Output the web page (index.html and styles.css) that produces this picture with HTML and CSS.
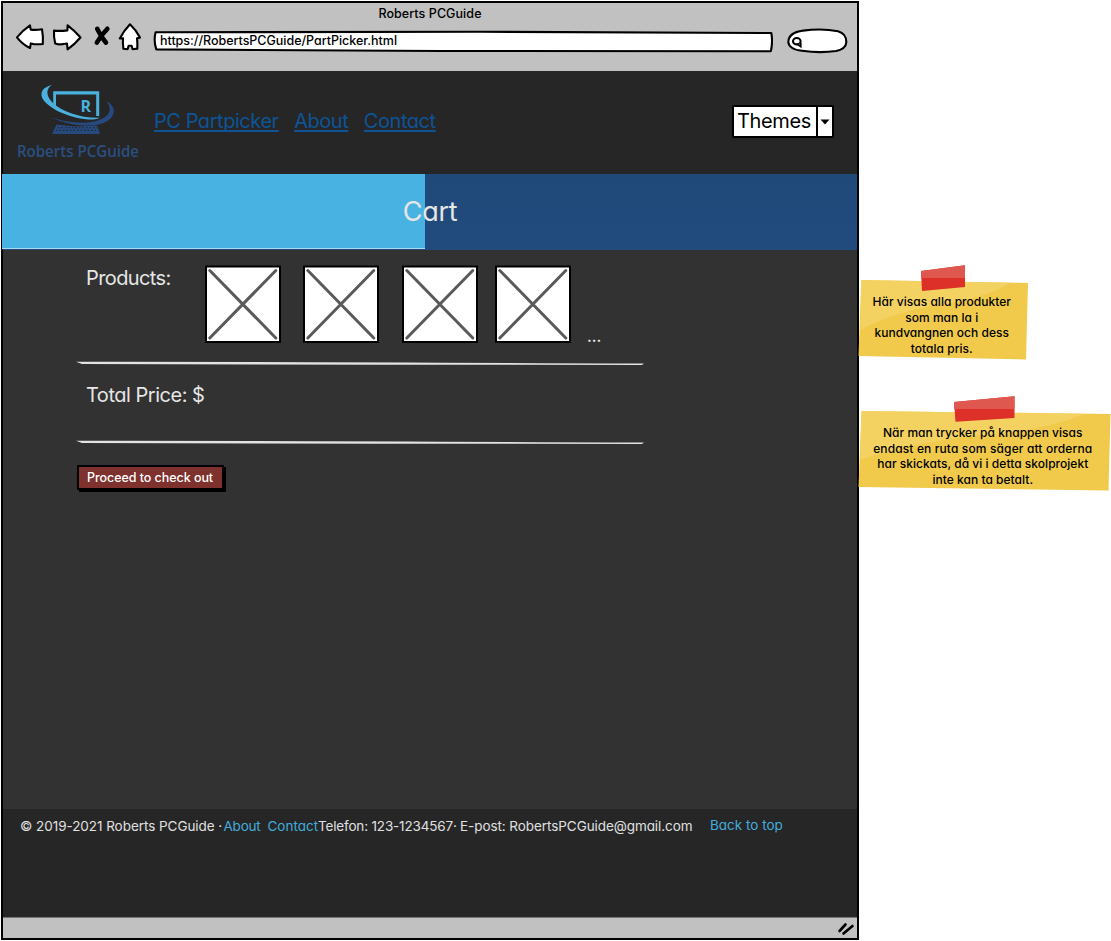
FILE: index.html
```html
<!DOCTYPE html>
<html lang="sv">
<head>
<meta charset="utf-8">
<title>Roberts PCGuide</title>
<link rel="stylesheet" href="styles.css">
</head>
<body>
<div class="board">
  <div class="window">
    <header class="chrome">
      <div class="window-title">Roberts PCGuide</div>
      <div class="toolbar">
        <svg class="nav-icons" width="130" height="32" viewBox="13 20 130 32" fill="#fff" stroke="#000" stroke-width="2.1" stroke-linejoin="round" stroke-linecap="round">
          <path d="M17 37.3 Q23 30 30 25.300 L30.700 29.600 Q36 30.200 42 29.200 Q43.400 37 42.800 44 Q36 44.800 30.800 43.400 L30 48 Q22 44 17 37.300Z"/>
          <path d="M54 30.600 Q60 31.300 67.400 30.400 L67.600 25.300 Q74 30 80.500 37.500 Q75 44 67.600 49.300 L67 43.600 Q60 45.200 55.200 43.400 Q53.600 37 54 30.600Z"/>
          <path stroke-width="4.600" d="M97.200 28.800Q101 37 106 42.600M107.300 28.800Q102 34 96.800 42.600"/>
          <path d="M130 24.300 Q136 30 140 37.600 L137 38.200 Q137.600 43 137.300 48.600 L132.600 49.200 L131.600 45.800 L128.600 45.800 L127.600 49.200 L123.400 48.800 Q122.600 43 123 38.200 L119.800 38.400 Q124 30.600 130 24.300Z"/>
        </svg>
        <div class="address">
          <svg class="shape" width="620" height="24" viewBox="153 29 620 24"><path d="M155.600 32.200 L480 31.800 L771.300 33 Q773 42 770.800 51.300 L440 51 L156.300 49.400 Q153.400 41 155.600 32.200Z" fill="#fff" stroke="#000" stroke-width="2.100" stroke-linejoin="round"/></svg>
          <span>https://RobertsPCGuide/PartPicker.html</span>
        </div>
        <svg class="search" width="62" height="26" viewBox="786 28 62 26" fill="#fff" stroke="#000" stroke-width="2.100" stroke-linecap="round">
          <path d="M802 50.800 Q789 49.500 788.300 42 Q788.600 32.500 803 30.600 Q822 28.200 838 31.200 Q846.500 33.500 846.300 42.500 Q845.800 49 836 51 Q820 53.400 802 50.800Z"/>
          <ellipse cx="796.800" cy="41.200" rx="3.800" ry="3.200"/>
          <path d="M797.500 44.300L800.700 46.600V43.500" stroke-width="1.800"/>
        </svg>
      </div>
    </header>

    <nav class="site-nav">
      <div class="logo">
        <svg width="76" height="50" viewBox="40 84 76 50">
          <path d="M53.200 106V91.200H99.200V116H96.200V94.600H56V108Z" fill="#4ab1df"/>
          <path d="M52 85C46.500 88 45 95 52.500 102.500C62 112 82 118.600 100 117.800C97 119.700 91 119.800 86 119.200C68 117.500 47 108 42 97.500C40 91 44 87 52 85Z" fill="#4ab1df"/>
          <path d="M106.500 101.500C112 104 115.600 109 113 115C108.500 124.500 92 127.500 74 124.500C64 122.500 56 120 51 117.500C62 121 76 123.500 88 122.500C106 120.500 115 112 106.500 101.500Z" fill="#26497e"/>
          <path d="M56.500 124.500L74 126.500L97 125.500L100 134H52Z" fill="#26497e"/>
          <path d="M58 127.700H97M56 130.300H98" stroke="#262626" stroke-width="1" stroke-dasharray="1.500 2" fill="none"/>
          <text x="80.500" y="111.500" class="logo-r">R</text>
        </svg>
        <span class="logo-name">Roberts PCGuide</span>
      </div>
      <div class="links">
        <a>PC Partpicker</a>
        <a>About</a>
        <a>Contact</a>
      </div>
      <div class="themes">
        <span class="themes-label">Themes</span>
        <span class="themes-arrow"><svg width="10" height="6" viewBox="0 0 10 6"><path d="M.5 .5H9.500L5 5.500Z"/></svg></span>
      </div>
    </nav>

    <section class="banner">
      <div class="banner-left"></div>
      <h1>Cart</h1>
    </section>

    <main>
      <div class="products">
        <div class="label">Products:</div>
        <svg class="thumb" viewBox="0 0 76 78"><rect x="1" y="1.500" width="74" height="75.500"/><path d="M4.800 5.500L70.800 73M70.800 5.500L4.800 73"/></svg>
        <svg class="thumb second" viewBox="0 0 76 78"><rect x="1" y="1.500" width="74" height="75.500"/><path d="M4.800 5.500L70.800 73M70.800 5.500L4.800 73"/></svg>
        <svg class="thumb third" viewBox="0 0 76 78"><rect x="1" y="1.500" width="74" height="75.500"/><path d="M4.800 5.500L70.800 73M70.800 5.500L4.800 73"/></svg>
        <svg class="thumb fourth" viewBox="0 0 76 78"><rect x="1" y="1.500" width="74" height="75.500"/><path d="M4.800 5.500L70.800 73M70.800 5.500L4.800 73"/></svg>
        <span class="more">...</span>
      </div>
      <svg class="rule" viewBox="0 0 568 4"><path d="M0 .8Q200 .6 568 2.600L566 4Q260 3.700 6 3Z"/></svg>
      <div class="total">Total Price: $</div>
      <svg class="rule" viewBox="0 0 568 4"><path d="M0 .8Q200 .6 568 2.600L566 4Q260 3.700 6 3Z"/></svg>
      <button class="checkout">Proceed to check out</button>
    </main>

    <footer class="site-footer">
      <span class="copyright">© 2019-2021 Roberts PCGuide ·</span>
      <a class="foot-about">About</a>
      <a class="foot-contact">Contact</a>
      <span class="phone">Telefon: 123-1234567·</span>
      <span class="email">E-post: RobertsPCGuide@gmail.com</span>
      <a class="to-top">Back to top</a>
    </footer>
    <div class="status">
      <svg width="18" height="14" viewBox="0 0 18 14" stroke="#000" stroke-width="2.600" stroke-linecap="round"><path d="M2.500 9L8.500 2.500M6.500 11.500L15.500 4"/></svg>
    </div>
  </div>

  <aside>
    <div class="note note-a">
      <svg class="paper" width="171" height="96" viewBox="858 264 171 96">
        <path d="M861.300 280L1028 283L1026 359.500L858.500 356Z" fill="#f1ca4c"/>
        <path d="M861.300 280L1010 282.700Q985 299 935 305Q890 314 860 330Z" fill="#f4d468" opacity=".75"/>
        <path d="M921 271L965 265.200V287L922 291Z" fill="#dd3028"/>
        <path d="M921 271L965 265.200V278H921Z" fill="#df5850"/>
      </svg>
      <p>Här visas alla produkter<br>som man la i<br>kundvangnen och dess<br>totala pris.</p>
    </div>
    <div class="note note-b">
      <svg class="paper" width="253" height="96" viewBox="858 395 253 96">
        <path d="M861.500 411L1110.500 414L1108.500 490.500L858.500 487Z" fill="#f1ca4c"/>
        <path d="M861.500 411L1084 413.700Q1050 430 970 436Q900 446 860 460Z" fill="#f4d468" opacity=".75"/>
        <path d="M954 402L1014.500 396.300V418L955.500 421.700Z" fill="#dd3028"/>
        <path d="M954 402L1014.500 396.300V409H954Z" fill="#df5850"/>
      </svg>
      <p>När man trycker på knappen visas<br><span class="loose">endast en ruta som säger att orderna</span><br>har skickats, då vi i detta skolprojekt<br>inte kan ta betalt.</p>
    </div>
  </aside>
</div>
</body>
</html>
```
FILE: styles.css
```css
* { box-sizing: border-box; }
body { margin: 0; background: #fff; font-family: Inter, "Open Sans", sans-serif; font-feature-settings: "cv11" 1; font-weight: 400; color: #000; }
svg { display: block; flex: none; }
span, a { white-space: nowrap; }
.board { display: flex; width: 1111px; height: 941px; overflow: hidden; }
.window { width: 858px; height: 939px; margin: 1px 0 0 1px; border: 2px solid #000; background: #323232; display: flex; flex-direction: column; flex: none; }

.chrome { height: 68px; background: #c1c1c1; flex: none; }
.window-title { height: 21px; line-height: 21px; text-align: center; font-size: 12.5px; letter-spacing: .07px; font-weight: 500; }
.toolbar { display: flex; align-items: flex-start; padding-left: 10px; }
.nav-icons { margin-top: -4px; }
.address { position: relative; width: 620px; height: 24px; margin: 5px 0 0 10px; padding-left: 7px; line-height: 24px; font-size: 12.5px; letter-spacing: -.02px; font-weight: 500; }
.shape { position: absolute; left: 0; top: 0; }
.address span { position: relative; }
.search { margin: 4px 0 0 13px; }

.site-nav { height: 103px; flex: none; background: #262626; display: flex; align-items: flex-start; }
.logo { width: 121px; margin: 13px 0 0 14px; display: flex; flex-direction: column; align-items: center; color: #2a4f80; font: 600 17px/34px "Open Sans", sans-serif; }
.logo-name { transform: scaleX(.885); }
.logo-r { font: 700 16px "Open Sans", sans-serif; fill: #4ab1df; }
.links { display: flex; gap: 15.5px; margin: 36px 0 0 16px; line-height: 28px; font-size: 20px; letter-spacing: -.45px; color: #0d5497; }
.links a { text-decoration: underline; text-decoration-thickness: 1.5px; text-underline-offset: 2px; text-decoration-skip-ink: none; }
.themes { margin: 34px 23px 0 auto; width: 102px; height: 33px; border: 2px solid #000; border-radius: 2px; background: #fff; display: flex; }
.themes-label { width: 82px; padding-left: 3px; line-height: 29px; font-size: 20px; letter-spacing: -.35px; }
.themes-arrow { flex: 1; border-left: 2px solid #000; display: flex; align-items: center; justify-content: center; }

.banner { height: 76px; flex: none; background: linear-gradient(#1e4979, #214b7c); display: flex; position: relative; }
.banner-left { width: 423px; height: 75px; margin-left: -1px; background: #48b2e2; border-bottom: 1px solid #a9d9ee; }
h1 { position: absolute; inset: 0; margin: 0; line-height: 75px; text-align: center; font-size: 27px; letter-spacing: -.3px; font-weight: 400; color: #e6e6e6; }

main { height: 559px; flex: none; padding: 15px 0 0 74px; color: #e6e6e6; font-size: 20px; }
.products { display: flex; height: 78px; }
.label { width: 128px; padding-left: 9px; line-height: 27px; letter-spacing: -.6px; }
.thumb { width: 76px; height: 78px; fill: #fff; stroke: #5a5a5a; stroke-width: 3; stroke-linecap: round; }
.thumb rect { stroke: #000; stroke-width: 2; }
.second { margin-left: 22px; }
.third { margin-left: 23px; }
.fourth { margin-left: 17px; }
.more { margin: 62px 0 0 16px; font-size: 15px; font-weight: 600; line-height: 20px; }
.rule { width: 568px; height: 4px; margin: 18px 0 0 -1px; fill: #e4e2e2; }
.total { height: 57px; padding: 16px 0 0 9px; line-height: 28px; letter-spacing: -.48px; }
.checkout { display: block; margin: 21px 0 0 0; width: 147px; height: 25px; padding: 0 0 0 8px; border: 2px solid #000; background: #7e312d; box-shadow: 2px 2px 0 #000; color: #fff; font: 500 12.5px/21px Inter, sans-serif; letter-spacing: -.05px; font-feature-settings: inherit; text-align: left; }

.site-footer { height: 108px; flex: none; background: #262626; display: flex; align-items: flex-start; padding: 7px 0 0 17px; line-height: 20px; font-size: 13.5px; color: #e0e0e0; }
.site-footer a { color: #43acdc; }
.copyright { width: 203.5px; letter-spacing: -.05px; }
.foot-about { width: 44px; letter-spacing: -.2px; }
.foot-contact { width: 50.5px; }
.phone { width: 142px; letter-spacing: -.17px; }
.email { width: 250px; letter-spacing: -.07px; }
.to-top { margin-top: -1px; }
.status { flex: 1; background: #c1c1c1; border-top: 1px solid #777; display: flex; justify-content: flex-end; padding: 4px 2px 0 0; }

aside { display: flex; flex-direction: column; }
.note { position: relative; height: 96px; }
.paper { position: absolute; inset: 0; }
.note p { position: relative; margin: 0; padding: 30px 3.5px 0 0; text-align: center; font-size: 12px; font-weight: 500; letter-spacing: .03px; line-height: 15.7px; }
.note .loose { letter-spacing: .13px; }
.note-a { width: 171px; margin: 264px 0 0 -1px; }
.note-b { width: 253px; margin: 35px 0 0 -1px; }
```
